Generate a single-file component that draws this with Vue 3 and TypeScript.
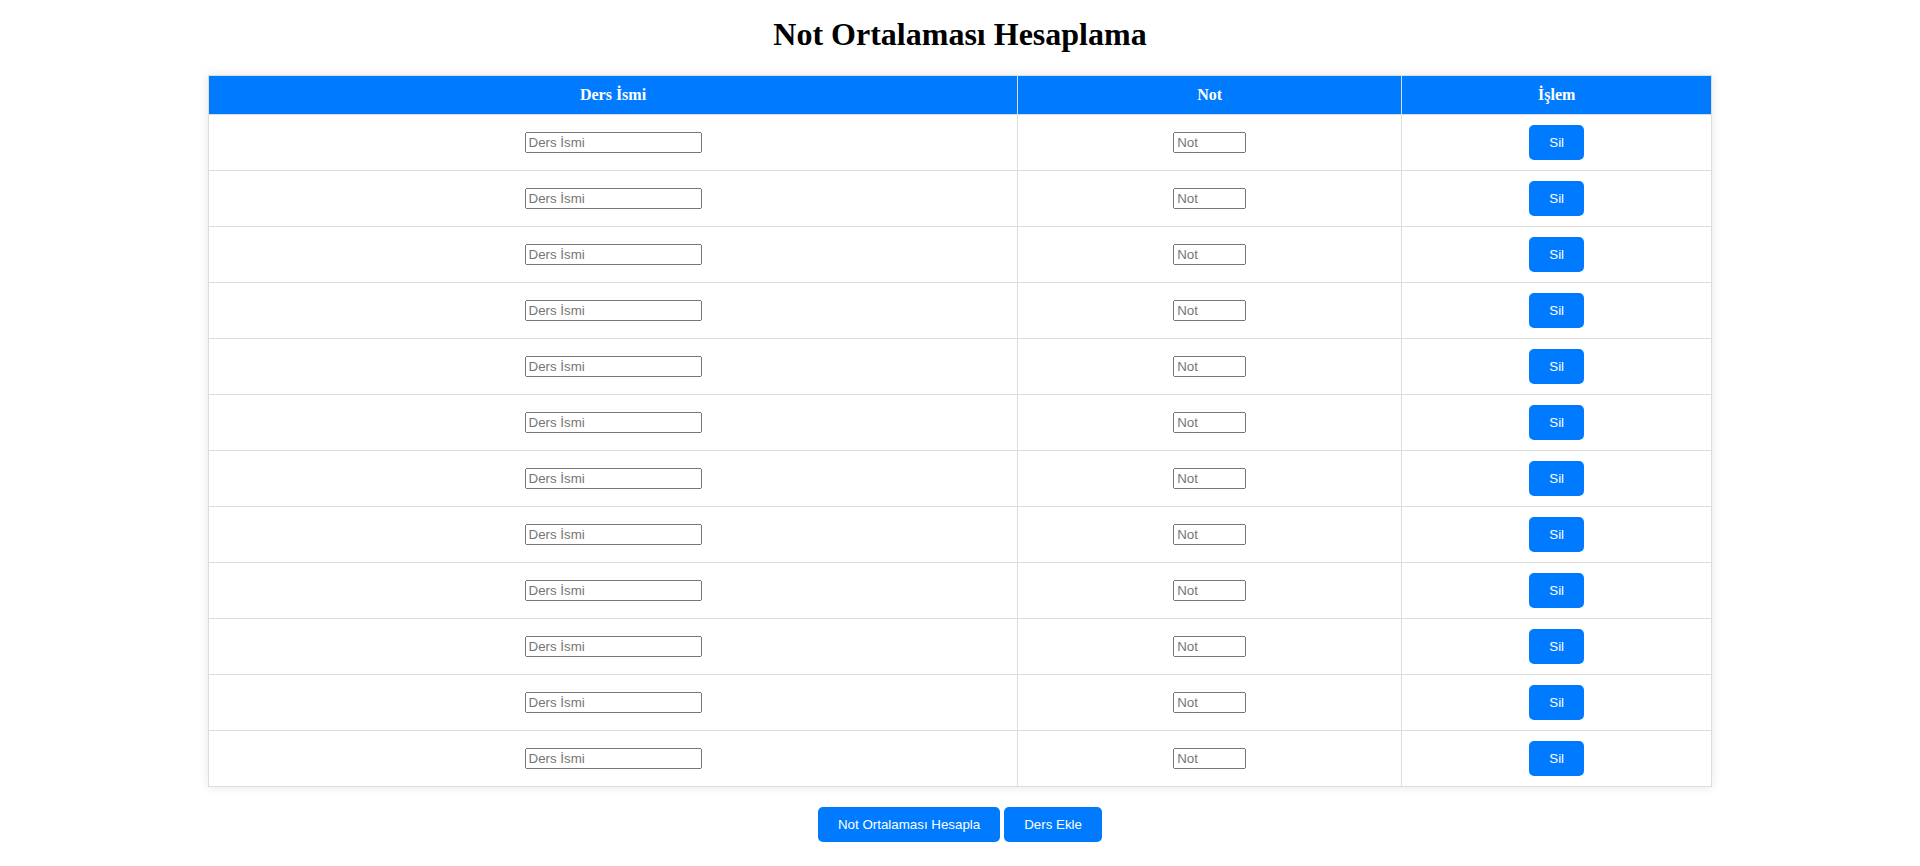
<script setup lang="ts">
import { ref } from 'vue'

interface Course {
  id: number
  name: string
  grade: string
}

const courses = ref<Course[]>(
  Array.from({ length: 12 }, (_, i) => ({ id: i + 1, name: '', grade: '' })),
)
let nextId = 13
const average = ref<number | null>(null)

function addCourse(): void {
  courses.value.push({ id: nextId++, name: '', grade: '' })
}

function removeCourse(id: number): void {
  courses.value = courses.value.filter((course) => course.id !== id)
}

function calculate(): void {
  const grades = courses.value
    .filter((course) => String(course.grade) !== '')
    .map((course) => Number(course.grade))
  average.value = grades.length
    ? grades.reduce((sum, grade) => sum + grade, 0) / grades.length
    : null
}
</script>

<template>
  <main class="page">
    <h1>Not Ortalaması Hesaplama</h1>
    <table>
      <thead>
        <tr>
          <th>Ders İsmi</th>
          <th>Not</th>
          <th>İşlem</th>
        </tr>
      </thead>
      <tbody>
        <tr v-for="course in courses" :key="course.id">
          <td>
            <input v-model="course.name" class="name" type="text" placeholder="Ders İsmi" aria-label="Ders İsmi" />
          </td>
          <td>
            <input v-model="course.grade" class="grade" type="number" min="0" max="100" placeholder="Not" aria-label="Not" />
          </td>
          <td><button type="button" @click="removeCourse(course.id)">Sil</button></td>
        </tr>
      </tbody>
    </table>
    <div class="actions">
      <button type="button" @click="calculate">Not Ortalaması Hesapla</button>
      <button type="button" @click="addCourse">Ders Ekle</button>
    </div>
    <p v-if="average !== null">{{ average.toFixed(2) }}</p>
  </main>
</template>

<style scoped>
.page {
  padding: 0 8px;
  font-family: 'Liberation Serif', 'Times New Roman', serif;
  font-size: 16px;
  text-align: center;
}

h1 {
  margin: 16px 0 22px;
  font-size: 32px;
  line-height: 37px;
}

table {
  width: 79%;
  margin: 0 auto 20px;
  border-collapse: collapse;
  box-shadow: 0 0 10px rgba(0, 0, 0, 0.1);
}

th,
td {
  padding: 10px;
  border: 1px solid #ddd;
  text-align: center;
}

th {
  background: #007bff;
  color: #fff;
}

input,
button {
  font-family: 'Liberation Sans', Arial, sans-serif;
}

input {
  box-sizing: border-box;
  height: 21px;
  padding: 1px 2px;
}

.name {
  width: 177px;
}

.grade {
  width: 73px;
}

.actions {
  display: flex;
  justify-content: center;
  gap: 4px;
}

button {
  padding: 10px 20px;
  border: none;
  border-radius: 5px;
  background: #007bff;
  color: #fff;
  cursor: pointer;
}

button:hover {
  background: #0056b3;
}
</style>
